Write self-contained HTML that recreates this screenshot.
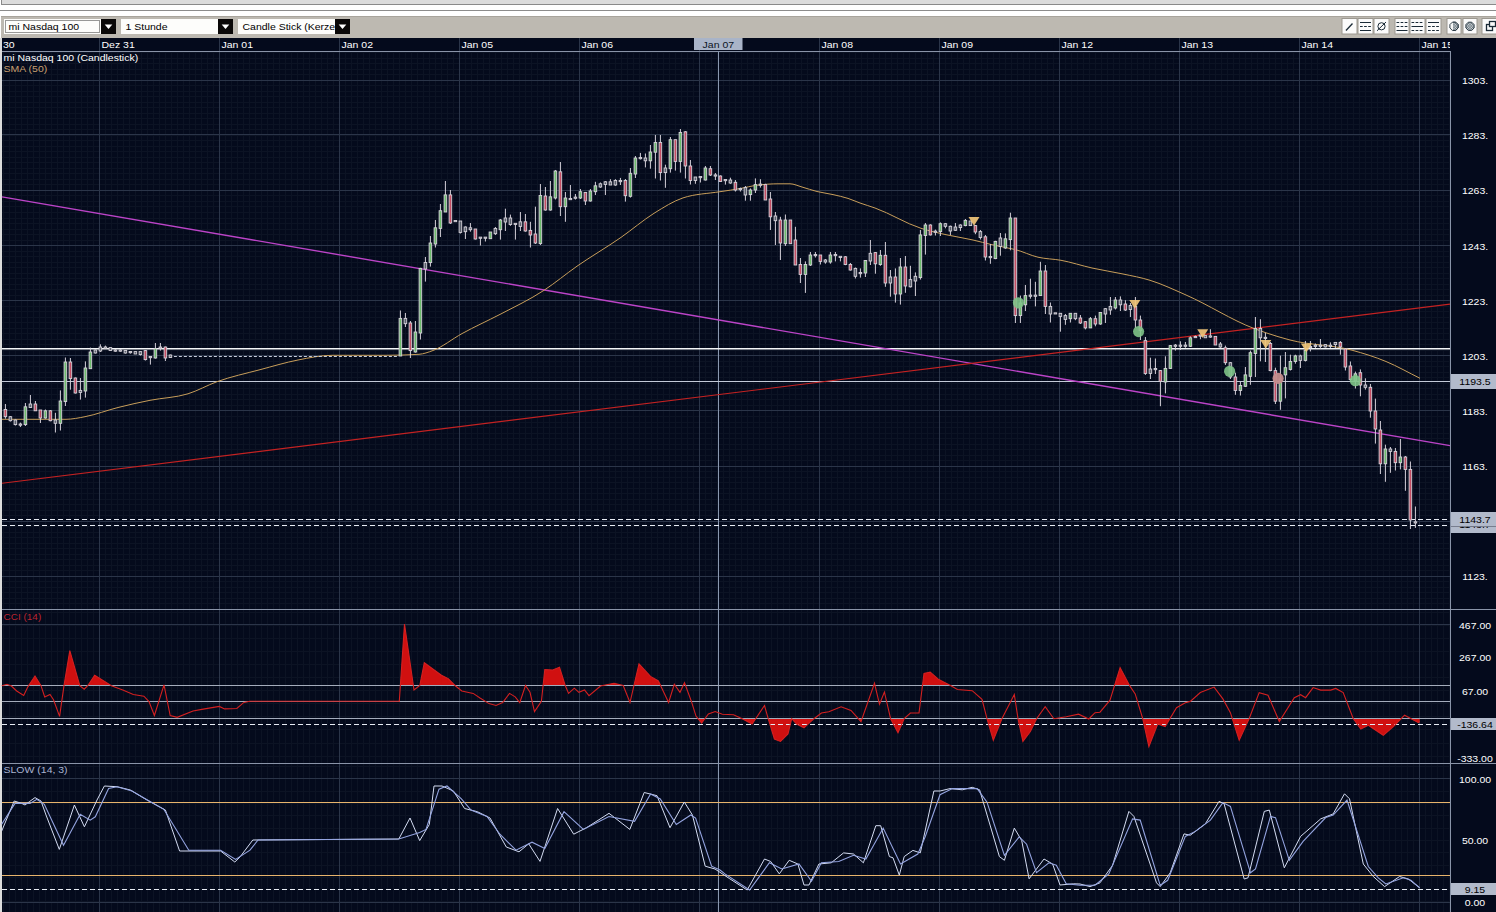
<!DOCTYPE html>
<html><head><meta charset="utf-8"><title>chart</title>
<style>html,body{margin:0;padding:0;background:#fff;width:1496px;height:912px;overflow:hidden;position:relative}</style>
</head><body>
<svg width="1496" height="912" viewBox="0 0 1496 912" style="position:absolute;left:0;top:0"><rect x="0" y="0" width="1496" height="37" fill="#ffffff"/><rect x="1" y="0" width="1496" height="4" fill="#dcdcdc"/><rect x="1" y="4" width="1496" height="1" fill="#8a8a8a"/><rect x="1" y="0" width="1" height="5" fill="#8a8a8a"/><rect x="0" y="10" width="1496" height="1" fill="#8c8c8c"/><rect x="1" y="16" width="1496" height="22" fill="#bdb9b1"/><rect x="1" y="16" width="1496" height="1" fill="#a8a49c"/><rect x="4" y="19" width="97" height="15" fill="#fdfdfb"/><svg x="4" y="19" width="97" height="15"><text transform="translate(4.50 11.20) scale(1 0.92)" x="0" y="0" font-family="Liberation Sans, sans-serif" font-size="10.5" fill="#000">mi Nasdaq 100</text></svg><rect x="5.5" y="20.5" width="94" height="12" fill="none" stroke="#333" stroke-width="1" stroke-dasharray="1,1"/><rect x="101" y="19" width="15" height="15" fill="#0a0808"/><polygon points="104.7,24.5 112.3,24.5 108.5,29" fill="#ffffff"/><rect x="121" y="19" width="97" height="15" fill="#fdfdfb"/><svg x="121" y="19" width="97" height="15"><text transform="translate(4.50 11.20) scale(1 0.92)" x="0" y="0" font-family="Liberation Sans, sans-serif" font-size="10.5" fill="#000">1 Stunde</text></svg><rect x="218" y="19" width="15" height="15" fill="#0a0808"/><polygon points="221.7,24.5 229.3,24.5 225.5,29" fill="#ffffff"/><rect x="238" y="19" width="97" height="15" fill="#fdfdfb"/><svg x="238" y="19" width="97" height="15"><text transform="translate(4.50 11.20) scale(1 0.92)" x="0" y="0" font-family="Liberation Sans, sans-serif" font-size="10.5" fill="#000">Candle Stick (Kerze</text></svg><rect x="335" y="19" width="15" height="15" fill="#0a0808"/><polygon points="338.7,24.5 346.3,24.5 342.5,29" fill="#ffffff"/><rect x="1342" y="18.5" width="15" height="15.5" fill="#fbfbfb" stroke="#9c9890" stroke-width="1"/><rect x="1358" y="18.5" width="15" height="15.5" fill="#fbfbfb" stroke="#9c9890" stroke-width="1"/><rect x="1374" y="18.5" width="15" height="15.5" fill="#fbfbfb" stroke="#9c9890" stroke-width="1"/><rect x="1395" y="18.5" width="14" height="15.5" fill="#fbfbfb" stroke="#9c9890" stroke-width="1"/><rect x="1410" y="18.5" width="15" height="15.5" fill="#fbfbfb" stroke="#9c9890" stroke-width="1"/><rect x="1426" y="18.5" width="15" height="15.5" fill="#fbfbfb" stroke="#9c9890" stroke-width="1"/><rect x="1447" y="18.5" width="14" height="15.5" fill="#fbfbfb" stroke="#9c9890" stroke-width="1"/><rect x="1463" y="18.5" width="14" height="15.5" fill="#fbfbfb" stroke="#9c9890" stroke-width="1"/><rect x="1482" y="18.5" width="15" height="15.5" fill="#fbfbfb" stroke="#9c9890" stroke-width="1"/><line x1="1346" y1="30.5" x2="1352.5" y2="23.5" stroke="#1a2a36" stroke-width="1.3"/><line x1="1360" y1="22.5" x2="1371" y2="22.5" stroke="#1a2a36" stroke-width="1"/><line x1="1360" y1="26.5" x2="1371" y2="26.5" stroke="#1a2a36" stroke-width="1" stroke-dasharray="2.7,1.4"/><line x1="1360" y1="30.5" x2="1371" y2="30.5" stroke="#1a2a36" stroke-width="1"/><circle cx="1381.5" cy="26.3" r="3.6" fill="none" stroke="#1a2a36" stroke-width="1"/><line x1="1377" y1="30.8" x2="1386" y2="22" stroke="#1a2a36" stroke-width="1"/><line x1="1396.5" y1="22.5" x2="1407.5" y2="22.5" stroke="#1a2a36" stroke-width="1" stroke-dasharray="2.7,1.4"/><line x1="1396.5" y1="26.5" x2="1407.5" y2="26.5" stroke="#1a2a36" stroke-width="1" stroke-dasharray="2.7,1.4"/><line x1="1396.5" y1="30.5" x2="1407.5" y2="30.5" stroke="#1a2a36" stroke-width="1"/><line x1="1411.5" y1="22.5" x2="1423" y2="22.5" stroke="#1a2a36" stroke-width="1" stroke-dasharray="2.7,1.4"/><line x1="1411.5" y1="26.5" x2="1423" y2="26.5" stroke="#1a2a36" stroke-width="1"/><line x1="1411.5" y1="30.5" x2="1423" y2="30.5" stroke="#1a2a36" stroke-width="1" stroke-dasharray="2.7,1.4"/><line x1="1428" y1="22.5" x2="1439" y2="22.5" stroke="#1a2a36" stroke-width="1"/><line x1="1428" y1="26.5" x2="1439" y2="26.5" stroke="#1a2a36" stroke-width="1" stroke-dasharray="2.7,1.4"/><line x1="1428" y1="30.5" x2="1439" y2="30.5" stroke="#1a2a36" stroke-width="1" stroke-dasharray="2.7,1.4"/><defs><pattern id="dots" width="1.6" height="1.6" patternUnits="userSpaceOnUse"><rect width="1.6" height="1.6" fill="#e8ecee"/><rect width="0.8" height="0.8" fill="#4a5a64"/><rect x="0.8" y="0.8" width="0.8" height="0.8" fill="#4a5a64"/></pattern><clipPath id="halfr"><rect x="1453" y="20" width="8" height="14"/></clipPath></defs><polygon points="1458.1,28.0 1455.7,30.4 1452.3,30.4 1449.9,28.0 1449.9,24.6 1452.3,22.2 1455.7,22.2 1458.1,24.6" fill="#f4f6f6" stroke="#1a2a36" stroke-width="0.9"/><g clip-path="url(#halfr)"><polygon points="1458.1,28.0 1455.7,30.4 1452.3,30.4 1449.9,28.0 1449.9,24.6 1452.3,22.2 1455.7,22.2 1458.1,24.6" fill="url(#dots)" stroke="#1a2a36" stroke-width="0.9"/></g><polygon points="1474.1,28.0 1471.7,30.4 1468.3,30.4 1465.9,28.0 1465.9,24.6 1468.3,22.2 1471.7,22.2 1474.1,24.6" fill="url(#dots)" stroke="#1a2a36" stroke-width="0.9"/><rect x="1486.5" y="24.5" width="6" height="6" fill="none" stroke="#1a2a36" stroke-width="1.3"/><rect x="1489.5" y="21.5" width="6" height="5" fill="#fbfbfb" stroke="#1a2a36" stroke-width="1.3"/><rect x="0" y="38" width="2" height="874" fill="#dcdcdc"/><rect x="2" y="38" width="1494" height="874" fill="#040a1c"/><path d="M3.5 51V912M9.5 51V912M15.5 51V912M21.5 51V912M27.5 51V912M33.5 51V912M39.5 51V912M45.5 51V912M51.5 51V912M57.5 51V912M63.5 51V912M69.5 51V912M75.5 51V912M81.5 51V912M87.5 51V912M93.5 51V912M99.5 51V912M105.5 51V912M111.5 51V912M117.5 51V912M123.5 51V912M129.5 51V912M135.5 51V912M141.5 51V912M147.5 51V912M153.5 51V912M159.5 51V912M165.5 51V912M171.5 51V912M177.5 51V912M183.5 51V912M189.5 51V912M195.5 51V912M201.5 51V912M207.5 51V912M213.5 51V912M219.5 51V912M225.5 51V912M231.5 51V912M237.5 51V912M243.5 51V912M249.5 51V912M255.5 51V912M261.5 51V912M267.5 51V912M273.5 51V912M279.5 51V912M285.5 51V912M291.5 51V912M297.5 51V912M303.5 51V912M309.5 51V912M315.5 51V912M321.5 51V912M327.5 51V912M333.5 51V912M339.5 51V912M345.5 51V912M351.5 51V912M357.5 51V912M363.5 51V912M369.5 51V912M375.5 51V912M381.5 51V912M387.5 51V912M393.5 51V912M399.5 51V912M405.5 51V912M411.5 51V912M417.5 51V912M423.5 51V912M429.5 51V912M435.5 51V912M441.5 51V912M447.5 51V912M453.5 51V912M459.5 51V912M465.5 51V912M471.5 51V912M477.5 51V912M483.5 51V912M489.5 51V912M495.5 51V912M501.5 51V912M507.5 51V912M513.5 51V912M519.5 51V912M525.5 51V912M531.5 51V912M537.5 51V912M543.5 51V912M549.5 51V912M555.5 51V912M561.5 51V912M567.5 51V912M573.5 51V912M579.5 51V912M585.5 51V912M591.5 51V912M597.5 51V912M603.5 51V912M609.5 51V912M615.5 51V912M621.5 51V912M627.5 51V912M633.5 51V912M639.5 51V912M645.5 51V912M651.5 51V912M657.5 51V912M663.5 51V912M669.5 51V912M675.5 51V912M681.5 51V912M687.5 51V912M693.5 51V912M699.5 51V912M705.5 51V912M711.5 51V912M717.5 51V912M723.5 51V912M729.5 51V912M735.5 51V912M741.5 51V912M747.5 51V912M753.5 51V912M759.5 51V912M765.5 51V912M771.5 51V912M777.5 51V912M783.5 51V912M789.5 51V912M795.5 51V912M801.5 51V912M807.5 51V912M813.5 51V912M819.5 51V912M825.5 51V912M831.5 51V912M837.5 51V912M843.5 51V912M849.5 51V912M855.5 51V912M861.5 51V912M867.5 51V912M873.5 51V912M879.5 51V912M885.5 51V912M891.5 51V912M897.5 51V912M903.5 51V912M909.5 51V912M915.5 51V912M921.5 51V912M927.5 51V912M933.5 51V912M939.5 51V912M945.5 51V912M951.5 51V912M957.5 51V912M963.5 51V912M969.5 51V912M975.5 51V912M981.5 51V912M987.5 51V912M993.5 51V912M999.5 51V912M1005.5 51V912M1011.5 51V912M1017.5 51V912M1023.5 51V912M1029.5 51V912M1035.5 51V912M1041.5 51V912M1047.5 51V912M1053.5 51V912M1059.5 51V912M1065.5 51V912M1071.5 51V912M1077.5 51V912M1083.5 51V912M1089.5 51V912M1095.5 51V912M1101.5 51V912M1107.5 51V912M1113.5 51V912M1119.5 51V912M1125.5 51V912M1131.5 51V912M1137.5 51V912M1143.5 51V912M1149.5 51V912M1155.5 51V912M1161.5 51V912M1167.5 51V912M1173.5 51V912M1179.5 51V912M1185.5 51V912M1191.5 51V912M1197.5 51V912M1203.5 51V912M1209.5 51V912M1215.5 51V912M1221.5 51V912M1227.5 51V912M1233.5 51V912M1239.5 51V912M1245.5 51V912M1251.5 51V912M1257.5 51V912M1263.5 51V912M1269.5 51V912M1275.5 51V912M1281.5 51V912M1287.5 51V912M1293.5 51V912M1299.5 51V912M1305.5 51V912M1311.5 51V912M1317.5 51V912M1323.5 51V912M1329.5 51V912M1335.5 51V912M1341.5 51V912M1347.5 51V912M1353.5 51V912M1359.5 51V912M1365.5 51V912M1371.5 51V912M1377.5 51V912M1383.5 51V912M1389.5 51V912M1395.5 51V912M1401.5 51V912M1407.5 51V912M1413.5 51V912M1419.5 51V912M1425.5 51V912M1431.5 51V912M1437.5 51V912M1443.5 51V912M1449.5 51V912" stroke="#0c1324" stroke-width="1"/><path d="M2 52.5H1450M2 58.5H1450M2 63.5H1450M2 69.5H1450M2 74.5H1450M2 80.5H1450M2 85.5H1450M2 91.5H1450M2 96.5H1450M2 102.5H1450M2 107.5H1450M2 113.5H1450M2 118.5H1450M2 124.5H1450M2 129.5H1450M2 135.5H1450M2 140.5H1450M2 146.5H1450M2 151.5H1450M2 157.5H1450M2 162.5H1450M2 168.5H1450M2 173.5H1450M2 179.5H1450M2 184.5H1450M2 190.5H1450M2 195.5H1450M2 201.5H1450M2 206.5H1450M2 212.5H1450M2 218.5H1450M2 223.5H1450M2 229.5H1450M2 234.5H1450M2 240.5H1450M2 245.5H1450M2 251.5H1450M2 256.5H1450M2 262.5H1450M2 267.5H1450M2 273.5H1450M2 278.5H1450M2 284.5H1450M2 289.5H1450M2 295.5H1450M2 300.5H1450M2 306.5H1450M2 311.5H1450M2 317.5H1450M2 322.5H1450M2 328.5H1450M2 333.5H1450M2 339.5H1450M2 344.5H1450M2 350.5H1450M2 355.5H1450M2 361.5H1450M2 366.5H1450M2 372.5H1450M2 377.5H1450M2 383.5H1450M2 388.5H1450M2 394.5H1450M2 399.5H1450M2 405.5H1450M2 410.5H1450M2 416.5H1450M2 422.5H1450M2 427.5H1450M2 433.5H1450M2 438.5H1450M2 444.5H1450M2 449.5H1450M2 455.5H1450M2 460.5H1450M2 466.5H1450M2 471.5H1450M2 477.5H1450M2 482.5H1450M2 488.5H1450M2 493.5H1450M2 499.5H1450M2 504.5H1450M2 510.5H1450M2 515.5H1450M2 521.5H1450M2 526.5H1450M2 532.5H1450M2 537.5H1450M2 543.5H1450M2 548.5H1450M2 554.5H1450M2 559.5H1450M2 565.5H1450M2 570.5H1450M2 576.5H1450M2 581.5H1450M2 587.5H1450M2 592.5H1450M2 598.5H1450M2 603.5H1450" stroke="#0c1324" stroke-width="1"/><path d="M2 612.5H1450M2 625.5H1450M2 638.5H1450M2 651.5H1450M2 664.5H1450M2 677.5H1450M2 690.5H1450M2 703.5H1450M2 716.5H1450M2 729.5H1450M2 743.5H1450M2 756.5H1450M2 766.5H1450M2 778.5H1450M2 791.5H1450M2 803.5H1450M2 815.5H1450M2 828.5H1450M2 840.5H1450M2 852.5H1450M2 865.5H1450M2 877.5H1450M2 889.5H1450M2 901.5H1450" stroke="#0c1324" stroke-width="1"/><path d="M2 80.5H1450M2 134.5H1450M2 190.5H1450M2 245.5H1450M2 300.5H1450M2 355.5H1450M2 410.5H1450M2 466.5H1450M2 521.5H1450M2 576.5H1450M2 624.5H1450M2 778.5H1450M2 902.5H1450" stroke="#2b3549" stroke-width="1"/><path d="M99.5 38V912M219.5 38V912M339.5 38V912M459.5 38V912M579.5 38V912M699.5 38V912M819.5 38V912M939.5 38V912M1059.5 38V912M1179.5 38V912M1299.5 38V912M1419.5 38V912" stroke="#2b3549" stroke-width="1"/><rect x="2" y="51" width="1448" height="1" fill="#8a94a8"/><rect x="2" y="609" width="1494" height="1" fill="#8a94a8"/><rect x="2" y="763" width="1494" height="1" fill="#8a94a8"/><rect x="1450" y="51" width="1" height="861" fill="#8a94a8"/><rect x="1451" y="38" width="45" height="13" fill="#040a1c"/><svg x="2" y="38" width="1448" height="13"><text transform="translate(1.00 10.20) scale(1 0.92)" x="0" y="0" font-family="Liberation Sans, sans-serif" font-size="10.5" fill="#ffffff">30</text><text transform="translate(99.50 10.20) scale(1 0.92)" x="0" y="0" font-family="Liberation Sans, sans-serif" font-size="10.5" fill="#ffffff">Dez 31</text><text transform="translate(219.50 10.20) scale(1 0.92)" x="0" y="0" font-family="Liberation Sans, sans-serif" font-size="10.5" fill="#ffffff">Jan 01</text><text transform="translate(339.50 10.20) scale(1 0.92)" x="0" y="0" font-family="Liberation Sans, sans-serif" font-size="10.5" fill="#ffffff">Jan 02</text><text transform="translate(459.50 10.20) scale(1 0.92)" x="0" y="0" font-family="Liberation Sans, sans-serif" font-size="10.5" fill="#ffffff">Jan 05</text><text transform="translate(579.50 10.20) scale(1 0.92)" x="0" y="0" font-family="Liberation Sans, sans-serif" font-size="10.5" fill="#ffffff">Jan 06</text><text transform="translate(819.50 10.20) scale(1 0.92)" x="0" y="0" font-family="Liberation Sans, sans-serif" font-size="10.5" fill="#ffffff">Jan 08</text><text transform="translate(939.50 10.20) scale(1 0.92)" x="0" y="0" font-family="Liberation Sans, sans-serif" font-size="10.5" fill="#ffffff">Jan 09</text><text transform="translate(1059.50 10.20) scale(1 0.92)" x="0" y="0" font-family="Liberation Sans, sans-serif" font-size="10.5" fill="#ffffff">Jan 12</text><text transform="translate(1179.50 10.20) scale(1 0.92)" x="0" y="0" font-family="Liberation Sans, sans-serif" font-size="10.5" fill="#ffffff">Jan 13</text><text transform="translate(1299.50 10.20) scale(1 0.92)" x="0" y="0" font-family="Liberation Sans, sans-serif" font-size="10.5" fill="#ffffff">Jan 14</text><text transform="translate(1419.50 10.20) scale(1 0.92)" x="0" y="0" font-family="Liberation Sans, sans-serif" font-size="10.5" fill="#ffffff">Jan 15</text></svg><rect x="694" y="38" width="48.5" height="12" fill="#a9b4c8"/><text transform="translate(718.30 48.00) scale(1 0.92)" x="0" y="0" text-anchor="middle" font-family="Liberation Sans, sans-serif" font-size="10.5" fill="#0c1424">Jan 07</text><rect x="718" y="51" width="1" height="861" fill="#8a98b0"/><text transform="translate(3.50 60.80) scale(1 0.92)" x="0" y="0" font-family="Liberation Sans, sans-serif" font-size="10.5" fill="#ffffff">mi Nasdaq 100 (Candlestick)</text><text transform="translate(3.50 71.60) scale(1 0.92)" x="0" y="0" font-family="Liberation Sans, sans-serif" font-size="10.5" fill="#c8a070">SMA (50)</text><rect x="2" y="348" width="1448" height="1.5" fill="#f4f6f8"/><rect x="2" y="381" width="1448" height="1" fill="#c4cad8"/><path d="M2 519.5H1450M2 525.5H1450" stroke="#e8ecf4" stroke-width="1.2" stroke-dasharray="5,3"/><line x1="2" y1="196.8436" x2="1450" y2="445.61" stroke="#bc44c8" stroke-width="1.4"/><line x1="2" y1="483.2526" x2="1450" y2="304.135" stroke="#c42222" stroke-width="1.2"/><path d="M2.0 419.3C23.3 419.3 44.7 419.3 66.0 419.3C72.3 419.3 78.7 417.9 85.0 416.7C96.0 414.6 107.0 410.3 118.0 407.5C128.7 404.8 139.3 402.4 150.0 400.3C162.7 397.8 175.3 397.7 188.0 393.8C197.7 390.8 207.3 385.2 217.0 381.7C231.3 376.5 245.7 373.5 260.0 369.7C272.7 366.3 285.3 362.5 298.0 360.0C309.3 357.8 320.7 355.3 332.0 355.3C349.7 355.3 367.3 355.3 385.0 355.3C396.3 355.3 407.7 355.0 419.0 354.3C423.7 354.0 428.3 352.2 433.0 350.5C442.7 346.9 452.3 338.9 462.0 333.6C474.7 326.6 487.3 321.0 500.0 314.4C514.7 306.7 529.3 299.9 544.0 290.3C555.0 283.1 566.0 273.9 577.0 266.2C591.7 256.0 606.3 247.6 621.0 237.4C632.0 229.7 643.0 220.2 654.0 213.3C663.7 207.3 673.3 201.1 683.0 197.9C695.3 193.8 707.7 193.7 720.0 191.7C727.0 190.6 734.0 189.7 741.0 188.4C746.0 187.5 751.0 186.0 756.0 185.3C763.7 184.3 771.3 183.8 779.0 183.8C782.7 183.8 786.3 183.8 790.0 183.8C794.0 183.8 798.0 185.9 802.0 187.0C807.0 188.4 812.0 190.3 817.0 191.5C822.3 192.8 827.7 193.4 833.0 194.6C838.0 195.7 843.0 196.8 848.0 198.4C852.0 199.7 856.0 201.6 860.0 203.0C865.0 204.8 870.0 206.2 875.0 208.0C890.3 213.5 905.7 223.4 921.0 228.3C929.7 231.1 938.3 233.0 947.0 234.9C955.7 236.8 964.3 238.0 973.0 240.0C979.3 241.4 985.7 243.3 992.0 244.7C996.3 245.7 1000.7 246.5 1005.0 247.4C1008.3 248.1 1011.7 248.7 1015.0 249.5C1022.7 251.4 1030.3 255.4 1038.0 257.2C1045.7 259.0 1053.3 258.9 1061.0 260.3C1071.3 262.2 1081.7 265.7 1092.0 268.0C1102.3 270.3 1112.7 271.8 1123.0 274.0C1132.0 275.9 1141.0 277.5 1150.0 280.3C1162.0 284.0 1174.0 289.7 1186.0 295.0C1208.7 304.9 1231.3 319.9 1254.0 328.5C1258.0 330.0 1262.0 331.4 1266.0 332.8C1274.0 335.5 1282.0 337.9 1290.0 340.0C1310.7 345.4 1331.3 344.6 1352.0 350.2C1363.3 353.3 1374.7 356.8 1386.0 361.5C1397.3 366.2 1408.7 372.7 1420.0 378.3" fill="none" stroke="#c89e5a" stroke-width="1"/><path d="M173.9 356.5h3M178.9 356.5h3M183.9 356.5h3M188.9 356.5h3M193.9 356.5h3M198.9 356.5h3M203.9 356.5h3M208.9 356.5h3M213.9 356.5h3M218.9 356.5h3M223.9 356.5h3M228.9 356.5h3M233.9 356.5h3M238.9 356.5h3M243.9 356.5h3M248.9 356.5h3M253.9 356.5h3M258.9 356.5h3M263.9 356.5h3M268.9 356.5h3M273.9 356.5h3M278.9 356.5h3M283.9 356.5h3M288.9 356.5h3M293.9 356.5h3M298.9 356.5h3M303.9 356.5h3M308.9 356.5h3M313.9 356.5h3M318.9 356.5h3M323.9 356.5h3M328.9 356.5h3M333.9 356.5h3M338.9 356.5h3M343.9 356.5h3M348.9 356.5h3M353.9 356.5h3M358.9 356.5h3M363.9 356.5h3M368.9 356.5h3M373.9 356.5h3M378.9 356.5h3M383.9 356.5h3M388.9 356.5h3M393.9 356.5h3" stroke="#c4cad8" stroke-width="1"/><path d="M5.4 404.0V418.7M10.4 416.0V421.5M15.4 419.5V425.5M20.4 422.6V427.0M25.4 403.0V426.0M30.4 395.0V407.5M35.4 401.0V410.8M40.4 410.0V423.0M45.4 409.5V418.7M50.4 410.0V421.3M55.4 412.8V432.5M60.4 390.4V430.5M65.4 357.5V406.0M70.4 358.0V389.7M75.4 377.5V393.5M80.4 378.0V399.6M85.4 361.4V397.6M90.4 347.6V368.7M95.4 349.5V353.5M100.4 344.3V352.0M105.4 345.6V348.3M110.4 347.6V350.5M115.4 349.2V351.8M120.4 349.2V351.8M125.4 350.5V353.6M130.4 351.6V353.6M135.4 351.6V354.0M140.4 351.6V355.5M145.4 350.0V360.5M150.4 356.6V364.6M155.4 343.0V358.6M160.4 343.0V350.6M165.4 346.6V361.0M170.4 354.6V357.6M400.4 310.5V356.0M405.4 313.0V327.0M410.4 321.0V358.0M415.4 321.0V352.6M420.4 267.8V339.5M425.4 257.0V281.6M430.4 236.0V266.6M435.4 220.0V247.5M440.4 204.0V237.0M445.4 181.0V212.0M450.4 190.0V224.0M455.4 220.5V221.5M460.4 221.0V233.5M465.4 226.4V239.0M470.4 223.0V231.7M475.4 229.0V239.5M480.4 237.6V245.5M485.4 237.6V241.5M490.4 232.0V238.7M495.4 227.0V235.0M500.4 219.0V239.6M505.4 208.7V231.0M510.4 214.6V225.8M515.4 223.0V239.6M520.4 212.0V231.0M525.4 214.0V231.7M530.4 221.8V247.5M535.4 206.7V244.0M540.4 184.0V245.0M545.4 187.0V210.7M550.4 181.0V210.7M555.4 170.0V199.5M560.4 162.0V216.0M565.4 192.0V221.8M570.4 185.0V199.6M575.4 194.0V199.6M580.4 189.0V199.0M585.4 192.0V205.0M590.4 189.0V201.6M595.4 181.8V195.0M600.4 182.5V187.8M605.4 181.0V195.0M610.4 179.2V185.0M615.4 179.2V185.8M620.4 177.9V185.0M625.4 179.0V201.6M630.4 168.0V197.6M635.4 156.0V178.0M640.4 152.9V159.5M645.4 153.5V167.4M650.4 145.0V168.7M655.4 135.0V178.5M660.4 135.0V180.5M665.4 164.7V187.8M670.4 137.0V172.6M675.4 139.7V170.6M680.4 129.0V172.6M685.4 131.0V178.5M690.4 160.0V184.5M695.4 177.0V183.8M700.4 177.0V182.5M705.4 166.0V180.5M710.4 166.0V176.0M715.4 173.0V180.0M720.4 175.4V181.5M725.4 179.2V184.6M730.4 177.7V183.8M735.4 180.0V191.5M740.4 187.6V191.5M745.4 186.0V200.7M750.4 188.4V200.7M755.4 178.4V193.0M760.4 179.2V187.6M765.4 183.8V200.0M770.4 192.0V230.0M775.4 212.0V245.0M780.4 216.8V260.0M785.4 214.5V246.0M790.4 220.0V243.7M795.4 226.8V265.0M800.4 258.0V283.0M805.4 261.4V292.9M810.4 252.0V266.0M815.4 252.0V257.5M820.4 255.0V264.5M825.4 259.0V263.7M830.4 252.0V263.7M835.4 252.0V261.4M840.4 256.8V261.4M845.4 256.0V265.2M850.4 263.0V270.6M855.4 267.5V278.5M860.4 268.4V277.6M865.4 260.0V277.0M870.4 240.0V265.0M875.4 252.0V273.7M880.4 250.0V265.8M885.4 242.0V286.8M890.4 270.0V296.7M895.4 268.4V302.6M900.4 258.0V304.6M905.4 256.0V292.8M910.4 265.8V287.5M915.4 272.4V296.0M920.4 230.0V279.6M925.4 223.0V254.6M930.4 224.3V235.5M935.4 229.6V235.5M940.4 222.4V236.0M945.4 223.0V228.3M950.4 225.6V235.0M955.4 223.0V231.0M960.4 224.3V231.0M965.4 219.0V226.3M970.4 221.0V225.6M975.4 225.0V234.2M980.4 230.0V239.5M985.4 235.0V260.5M990.4 244.0V263.8M995.4 240.8V259.2M1000.4 233.0V255.7M1005.4 233.4V248.8M1010.4 212.7V250.3M1015.4 218.0V323.0M1020.4 295.6V323.0M1025.4 285.0V311.0M1030.4 278.7V298.7M1035.4 281.8V306.4M1040.4 261.8V295.6M1045.4 265.0V314.0M1050.4 302.5V322.5M1055.4 313.0V314.0M1060.4 313.3V331.7M1065.4 314.0V324.8M1070.4 313.3V322.5M1075.4 313.3V320.2M1080.4 315.0V324.0M1085.4 321.0V329.4M1090.4 317.0V327.9M1095.4 315.6V326.3M1100.4 312.5V324.8M1105.4 308.0V323.0M1110.4 297.0V314.8M1115.4 297.0V309.5M1120.4 296.4V311.0M1125.4 300.2V311.0M1130.4 303.0V317.0M1135.4 297.0V328.0M1140.4 315.6V340.0M1145.4 337.0V374.9M1150.4 357.7V379.0M1155.4 358.5V374.0M1160.4 370.0V406.2M1165.4 356.3V393.4M1170.4 345.0V369.0M1175.4 344.0V350.6M1180.4 341.3V350.0M1185.4 342.0V347.8M1190.4 336.4V347.0M1195.4 335.6V337.8M1200.4 335.0V339.2M1205.4 335.6V337.8M1210.4 329.2V337.8M1215.4 336.4V345.0M1220.4 342.0V347.8M1225.4 345.6V364.9M1230.4 362.0V379.0M1235.4 372.7V394.8M1240.4 382.0V395.5M1245.4 367.0V387.0M1250.4 350.6V384.8M1255.4 317.0V377.0M1260.4 319.2V361.3M1265.4 332.8V362.0M1270.4 342.0V371.3M1275.4 367.7V404.0M1280.4 355.6V409.8M1285.4 352.0V398.4M1290.4 354.7V370.5M1295.4 354.7V363.7M1300.4 354.7V368.0M1305.4 341.0V361.5M1310.4 341.0V351.4M1315.4 343.5V348.0M1320.4 339.0V349.0M1325.4 344.0V347.5M1330.4 342.4V348.0M1335.4 342.4V348.0M1340.4 341.0V354.7M1345.4 348.0V370.5M1350.4 361.5V381.7M1355.4 371.6V388.5M1360.4 369.4V396.3M1365.4 378.3V389.6M1370.4 384.0V417.7M1375.4 398.6V443.6M1380.4 421.0V474.0M1385.4 444.7V481.8M1390.4 447.0V472.8M1395.4 448.0V470.5M1400.4 439.0V469.4M1405.4 456.0V490.8M1410.4 461.5V529.0M1415.4 506.5V527.9" stroke="#d6d2da" stroke-width="1"/><rect x="4.1" y="409.5" width="2.6" height="7.2" fill="#c44c62" stroke="#d6d2da" stroke-width="0.9"/><rect x="9.1" y="416.7" width="2.6" height="4.0" fill="#5a606c" stroke="#d6d2da" stroke-width="0.9"/><rect x="14.1" y="420.0" width="2.6" height="4.6" fill="#5a606c" stroke="#d6d2da" stroke-width="0.9"/><rect x="19.1" y="424.0" width="2.6" height="1.2" fill="#5a606c" stroke="#d6d2da" stroke-width="0.9"/><rect x="24.1" y="406.8" width="2.6" height="17.8" fill="#6cbc6c" stroke="#d6d2da" stroke-width="0.9"/><rect x="29.1" y="404.0" width="2.6" height="3.5" fill="#5a606c" stroke="#d6d2da" stroke-width="0.9"/><rect x="34.1" y="404.0" width="2.6" height="6.8" fill="#c44c62" stroke="#d6d2da" stroke-width="0.9"/><rect x="39.1" y="410.0" width="2.6" height="8.0" fill="#c44c62" stroke="#d6d2da" stroke-width="0.9"/><rect x="44.1" y="410.8" width="2.6" height="7.2" fill="#6cbc6c" stroke="#d6d2da" stroke-width="0.9"/><rect x="49.1" y="410.8" width="2.6" height="9.9" fill="#c44c62" stroke="#d6d2da" stroke-width="0.9"/><rect x="54.1" y="420.0" width="2.6" height="3.3" fill="#5a606c" stroke="#d6d2da" stroke-width="0.9"/><rect x="59.1" y="401.0" width="2.6" height="22.3" fill="#6cbc6c" stroke="#d6d2da" stroke-width="0.9"/><rect x="64.1" y="362.0" width="2.6" height="39.6" fill="#6cbc6c" stroke="#d6d2da" stroke-width="0.9"/><rect x="69.1" y="362.0" width="2.6" height="16.6" fill="#c44c62" stroke="#d6d2da" stroke-width="0.9"/><rect x="74.1" y="378.0" width="2.6" height="15.0" fill="#c44c62" stroke="#d6d2da" stroke-width="0.9"/><rect x="79.1" y="390.4" width="2.6" height="2.0" fill="#5a606c" stroke="#d6d2da" stroke-width="0.9"/><rect x="84.1" y="368.0" width="2.6" height="23.0" fill="#6cbc6c" stroke="#d6d2da" stroke-width="0.9"/><rect x="89.1" y="352.0" width="2.6" height="16.7" fill="#6cbc6c" stroke="#d6d2da" stroke-width="0.9"/><rect x="94.1" y="350.0" width="2.6" height="3.0" fill="#5a606c" stroke="#d6d2da" stroke-width="0.9"/><rect x="99.1" y="347.0" width="2.6" height="4.0" fill="#5a606c" stroke="#d6d2da" stroke-width="0.9"/><rect x="104.1" y="347.0" width="2.6" height="1.3" fill="#5a606c" stroke="#d6d2da" stroke-width="0.9"/><rect x="109.1" y="347.6" width="2.6" height="2.9" fill="#5a606c" stroke="#d6d2da" stroke-width="0.9"/><rect x="114.1" y="350.0" width="2.6" height="1.2" fill="#5a606c" stroke="#d6d2da" stroke-width="0.9"/><rect x="119.1" y="350.0" width="2.6" height="1.2" fill="#5a606c" stroke="#d6d2da" stroke-width="0.9"/><rect x="124.1" y="350.5" width="2.6" height="2.5" fill="#5a606c" stroke="#d6d2da" stroke-width="0.9"/><rect x="129.1" y="351.5" width="2.6" height="1.2" fill="#5a606c" stroke="#d6d2da" stroke-width="0.9"/><rect x="134.1" y="351.6" width="2.6" height="2.4" fill="#5a606c" stroke="#d6d2da" stroke-width="0.9"/><rect x="139.1" y="351.6" width="2.6" height="2.9" fill="#5a606c" stroke="#d6d2da" stroke-width="0.9"/><rect x="144.1" y="350.6" width="2.6" height="9.0" fill="#c44c62" stroke="#d6d2da" stroke-width="0.9"/><rect x="149.1" y="356.5" width="2.6" height="1.2" fill="#5a606c" stroke="#d6d2da" stroke-width="0.9"/><rect x="154.1" y="348.6" width="2.6" height="9.4" fill="#6cbc6c" stroke="#d6d2da" stroke-width="0.9"/><rect x="159.1" y="347.0" width="2.6" height="1.2" fill="#5a606c" stroke="#d6d2da" stroke-width="0.9"/><rect x="164.1" y="347.0" width="2.6" height="11.0" fill="#c44c62" stroke="#d6d2da" stroke-width="0.9"/><rect x="169.1" y="355.0" width="2.6" height="2.5" fill="#5a606c" stroke="#d6d2da" stroke-width="0.9"/><rect x="399.1" y="318.4" width="2.6" height="37.6" fill="#6cbc6c" stroke="#d6d2da" stroke-width="0.9"/><rect x="404.1" y="318.4" width="2.6" height="5.3" fill="#5a606c" stroke="#d6d2da" stroke-width="0.9"/><rect x="409.1" y="323.0" width="2.6" height="27.6" fill="#c44c62" stroke="#d6d2da" stroke-width="0.9"/><rect x="414.1" y="332.0" width="2.6" height="20.0" fill="#6cbc6c" stroke="#d6d2da" stroke-width="0.9"/><rect x="419.1" y="268.4" width="2.6" height="64.6" fill="#6cbc6c" stroke="#d6d2da" stroke-width="0.9"/><rect x="424.1" y="262.5" width="2.6" height="6.5" fill="#5a606c" stroke="#d6d2da" stroke-width="0.9"/><rect x="429.1" y="243.0" width="2.6" height="19.6" fill="#6cbc6c" stroke="#d6d2da" stroke-width="0.9"/><rect x="434.1" y="227.8" width="2.6" height="16.2" fill="#6cbc6c" stroke="#d6d2da" stroke-width="0.9"/><rect x="439.1" y="210.7" width="2.6" height="17.7" fill="#6cbc6c" stroke="#d6d2da" stroke-width="0.9"/><rect x="444.1" y="194.9" width="2.6" height="17.1" fill="#6cbc6c" stroke="#d6d2da" stroke-width="0.9"/><rect x="449.1" y="194.9" width="2.6" height="28.1" fill="#c44c62" stroke="#d6d2da" stroke-width="0.9"/><rect x="454.1" y="220.5" width="2.6" height="1.2" fill="#5a606c" stroke="#d6d2da" stroke-width="0.9"/><rect x="459.1" y="221.0" width="2.6" height="11.4" fill="#5a606c" stroke="#d6d2da" stroke-width="0.9"/><rect x="464.1" y="227.0" width="2.6" height="4.7" fill="#5a606c" stroke="#d6d2da" stroke-width="0.9"/><rect x="469.1" y="227.8" width="2.6" height="1.9" fill="#5a606c" stroke="#d6d2da" stroke-width="0.9"/><rect x="474.1" y="229.0" width="2.6" height="10.0" fill="#c44c62" stroke="#d6d2da" stroke-width="0.9"/><rect x="479.1" y="237.1" width="2.6" height="1.2" fill="#5a606c" stroke="#d6d2da" stroke-width="0.9"/><rect x="484.1" y="237.1" width="2.6" height="1.2" fill="#5a606c" stroke="#d6d2da" stroke-width="0.9"/><rect x="489.1" y="232.0" width="2.6" height="6.7" fill="#6cbc6c" stroke="#d6d2da" stroke-width="0.9"/><rect x="494.1" y="228.4" width="2.6" height="5.3" fill="#5a606c" stroke="#d6d2da" stroke-width="0.9"/><rect x="499.1" y="220.0" width="2.6" height="9.7" fill="#6cbc6c" stroke="#d6d2da" stroke-width="0.9"/><rect x="504.1" y="218.0" width="2.6" height="4.0" fill="#5a606c" stroke="#d6d2da" stroke-width="0.9"/><rect x="509.1" y="218.0" width="2.6" height="6.5" fill="#5a606c" stroke="#d6d2da" stroke-width="0.9"/><rect x="514.1" y="223.3" width="2.6" height="1.2" fill="#5a606c" stroke="#d6d2da" stroke-width="0.9"/><rect x="519.1" y="221.8" width="2.6" height="4.6" fill="#5a606c" stroke="#d6d2da" stroke-width="0.9"/><rect x="524.1" y="221.8" width="2.6" height="9.2" fill="#c44c62" stroke="#d6d2da" stroke-width="0.9"/><rect x="529.1" y="230.4" width="2.6" height="4.6" fill="#c44c62" stroke="#d6d2da" stroke-width="0.9"/><rect x="534.1" y="234.0" width="2.6" height="9.0" fill="#c44c62" stroke="#d6d2da" stroke-width="0.9"/><rect x="539.1" y="195.5" width="2.6" height="48.1" fill="#6cbc6c" stroke="#d6d2da" stroke-width="0.9"/><rect x="544.1" y="196.0" width="2.6" height="14.0" fill="#c44c62" stroke="#d6d2da" stroke-width="0.9"/><rect x="549.1" y="196.8" width="2.6" height="13.2" fill="#6cbc6c" stroke="#d6d2da" stroke-width="0.9"/><rect x="554.1" y="171.0" width="2.6" height="27.0" fill="#6cbc6c" stroke="#d6d2da" stroke-width="0.9"/><rect x="559.1" y="171.8" width="2.6" height="34.9" fill="#c44c62" stroke="#d6d2da" stroke-width="0.9"/><rect x="564.1" y="198.0" width="2.6" height="8.7" fill="#6cbc6c" stroke="#d6d2da" stroke-width="0.9"/><rect x="569.1" y="198.5" width="2.6" height="1.2" fill="#5a606c" stroke="#d6d2da" stroke-width="0.9"/><rect x="574.1" y="197.1" width="2.6" height="1.2" fill="#5a606c" stroke="#d6d2da" stroke-width="0.9"/><rect x="579.1" y="191.7" width="2.6" height="6.3" fill="#6cbc6c" stroke="#d6d2da" stroke-width="0.9"/><rect x="584.1" y="192.4" width="2.6" height="8.6" fill="#c44c62" stroke="#d6d2da" stroke-width="0.9"/><rect x="589.1" y="191.0" width="2.6" height="10.0" fill="#6cbc6c" stroke="#d6d2da" stroke-width="0.9"/><rect x="594.1" y="185.8" width="2.6" height="5.9" fill="#6cbc6c" stroke="#d6d2da" stroke-width="0.9"/><rect x="599.1" y="183.8" width="2.6" height="3.2" fill="#5a606c" stroke="#d6d2da" stroke-width="0.9"/><rect x="604.1" y="181.8" width="2.6" height="2.7" fill="#5a606c" stroke="#d6d2da" stroke-width="0.9"/><rect x="609.1" y="181.8" width="2.6" height="3.2" fill="#5a606c" stroke="#d6d2da" stroke-width="0.9"/><rect x="614.1" y="180.5" width="2.6" height="4.5" fill="#5a606c" stroke="#d6d2da" stroke-width="0.9"/><rect x="619.1" y="180.5" width="2.6" height="1.2" fill="#5a606c" stroke="#d6d2da" stroke-width="0.9"/><rect x="624.1" y="180.5" width="2.6" height="15.2" fill="#c44c62" stroke="#d6d2da" stroke-width="0.9"/><rect x="629.1" y="173.3" width="2.6" height="23.0" fill="#6cbc6c" stroke="#d6d2da" stroke-width="0.9"/><rect x="634.1" y="158.0" width="2.6" height="16.0" fill="#6cbc6c" stroke="#d6d2da" stroke-width="0.9"/><rect x="639.1" y="157.5" width="2.6" height="1.2" fill="#5a606c" stroke="#d6d2da" stroke-width="0.9"/><rect x="644.1" y="158.0" width="2.6" height="2.8" fill="#5a606c" stroke="#d6d2da" stroke-width="0.9"/><rect x="649.1" y="152.0" width="2.6" height="8.8" fill="#6cbc6c" stroke="#d6d2da" stroke-width="0.9"/><rect x="654.1" y="142.4" width="2.6" height="9.8" fill="#6cbc6c" stroke="#d6d2da" stroke-width="0.9"/><rect x="659.1" y="142.4" width="2.6" height="30.2" fill="#c44c62" stroke="#d6d2da" stroke-width="0.9"/><rect x="664.1" y="168.0" width="2.6" height="4.6" fill="#5a606c" stroke="#d6d2da" stroke-width="0.9"/><rect x="669.1" y="139.7" width="2.6" height="29.0" fill="#6cbc6c" stroke="#d6d2da" stroke-width="0.9"/><rect x="674.1" y="139.7" width="2.6" height="21.7" fill="#c44c62" stroke="#d6d2da" stroke-width="0.9"/><rect x="679.1" y="132.5" width="2.6" height="28.9" fill="#6cbc6c" stroke="#d6d2da" stroke-width="0.9"/><rect x="684.1" y="131.8" width="2.6" height="34.2" fill="#c44c62" stroke="#d6d2da" stroke-width="0.9"/><rect x="689.1" y="166.0" width="2.6" height="14.5" fill="#c44c62" stroke="#d6d2da" stroke-width="0.9"/><rect x="694.1" y="177.0" width="2.6" height="3.5" fill="#5a606c" stroke="#d6d2da" stroke-width="0.9"/><rect x="699.1" y="176.5" width="2.6" height="1.2" fill="#5a606c" stroke="#d6d2da" stroke-width="0.9"/><rect x="704.1" y="168.0" width="2.6" height="12.0" fill="#6cbc6c" stroke="#d6d2da" stroke-width="0.9"/><rect x="709.1" y="168.7" width="2.6" height="6.3" fill="#c44c62" stroke="#d6d2da" stroke-width="0.9"/><rect x="714.1" y="174.9" width="2.6" height="1.2" fill="#5a606c" stroke="#d6d2da" stroke-width="0.9"/><rect x="719.1" y="176.0" width="2.6" height="5.5" fill="#c44c62" stroke="#d6d2da" stroke-width="0.9"/><rect x="724.1" y="179.5" width="2.6" height="1.2" fill="#5a606c" stroke="#d6d2da" stroke-width="0.9"/><rect x="729.1" y="180.0" width="2.6" height="3.0" fill="#5a606c" stroke="#d6d2da" stroke-width="0.9"/><rect x="734.1" y="182.3" width="2.6" height="7.7" fill="#c44c62" stroke="#d6d2da" stroke-width="0.9"/><rect x="739.1" y="188.5" width="2.6" height="1.2" fill="#5a606c" stroke="#d6d2da" stroke-width="0.9"/><rect x="744.1" y="187.6" width="2.6" height="7.4" fill="#5a606c" stroke="#d6d2da" stroke-width="0.9"/><rect x="749.1" y="190.0" width="2.6" height="4.6" fill="#6cbc6c" stroke="#d6d2da" stroke-width="0.9"/><rect x="754.1" y="184.6" width="2.6" height="5.4" fill="#6cbc6c" stroke="#d6d2da" stroke-width="0.9"/><rect x="759.1" y="184.1" width="2.6" height="1.2" fill="#5a606c" stroke="#d6d2da" stroke-width="0.9"/><rect x="764.1" y="184.6" width="2.6" height="15.4" fill="#c44c62" stroke="#d6d2da" stroke-width="0.9"/><rect x="769.1" y="199.0" width="2.6" height="17.8" fill="#c44c62" stroke="#d6d2da" stroke-width="0.9"/><rect x="774.1" y="216.0" width="2.6" height="4.7" fill="#5a606c" stroke="#d6d2da" stroke-width="0.9"/><rect x="779.1" y="220.0" width="2.6" height="23.0" fill="#c44c62" stroke="#d6d2da" stroke-width="0.9"/><rect x="784.1" y="220.0" width="2.6" height="23.7" fill="#6cbc6c" stroke="#d6d2da" stroke-width="0.9"/><rect x="789.1" y="220.0" width="2.6" height="23.7" fill="#c44c62" stroke="#d6d2da" stroke-width="0.9"/><rect x="794.1" y="240.0" width="2.6" height="25.0" fill="#c44c62" stroke="#d6d2da" stroke-width="0.9"/><rect x="799.1" y="264.5" width="2.6" height="9.9" fill="#c44c62" stroke="#d6d2da" stroke-width="0.9"/><rect x="804.1" y="264.5" width="2.6" height="9.9" fill="#6cbc6c" stroke="#d6d2da" stroke-width="0.9"/><rect x="809.1" y="255.0" width="2.6" height="10.0" fill="#6cbc6c" stroke="#d6d2da" stroke-width="0.9"/><rect x="814.1" y="254.5" width="2.6" height="1.2" fill="#5a606c" stroke="#d6d2da" stroke-width="0.9"/><rect x="819.1" y="255.0" width="2.6" height="6.4" fill="#c44c62" stroke="#d6d2da" stroke-width="0.9"/><rect x="824.1" y="260.0" width="2.6" height="2.0" fill="#5a606c" stroke="#d6d2da" stroke-width="0.9"/><rect x="829.1" y="255.0" width="2.6" height="7.0" fill="#6cbc6c" stroke="#d6d2da" stroke-width="0.9"/><rect x="834.1" y="254.5" width="2.6" height="1.2" fill="#5a606c" stroke="#d6d2da" stroke-width="0.9"/><rect x="839.1" y="256.3" width="2.6" height="1.2" fill="#5a606c" stroke="#d6d2da" stroke-width="0.9"/><rect x="844.1" y="256.8" width="2.6" height="7.7" fill="#c44c62" stroke="#d6d2da" stroke-width="0.9"/><rect x="849.1" y="264.5" width="2.6" height="5.5" fill="#c44c62" stroke="#d6d2da" stroke-width="0.9"/><rect x="854.1" y="268.4" width="2.6" height="7.9" fill="#5a606c" stroke="#d6d2da" stroke-width="0.9"/><rect x="859.1" y="272.5" width="2.6" height="1.2" fill="#5a606c" stroke="#d6d2da" stroke-width="0.9"/><rect x="864.1" y="260.5" width="2.6" height="12.5" fill="#6cbc6c" stroke="#d6d2da" stroke-width="0.9"/><rect x="869.1" y="253.3" width="2.6" height="7.7" fill="#5a606c" stroke="#d6d2da" stroke-width="0.9"/><rect x="874.1" y="252.6" width="2.6" height="11.2" fill="#c44c62" stroke="#d6d2da" stroke-width="0.9"/><rect x="879.1" y="255.3" width="2.6" height="9.2" fill="#6cbc6c" stroke="#d6d2da" stroke-width="0.9"/><rect x="884.1" y="255.3" width="2.6" height="27.7" fill="#c44c62" stroke="#d6d2da" stroke-width="0.9"/><rect x="889.1" y="277.0" width="2.6" height="6.0" fill="#5a606c" stroke="#d6d2da" stroke-width="0.9"/><rect x="894.1" y="277.0" width="2.6" height="17.0" fill="#c44c62" stroke="#d6d2da" stroke-width="0.9"/><rect x="899.1" y="267.0" width="2.6" height="27.0" fill="#6cbc6c" stroke="#d6d2da" stroke-width="0.9"/><rect x="904.1" y="267.0" width="2.6" height="19.0" fill="#c44c62" stroke="#d6d2da" stroke-width="0.9"/><rect x="909.1" y="279.6" width="2.6" height="7.2" fill="#5a606c" stroke="#d6d2da" stroke-width="0.9"/><rect x="914.1" y="276.3" width="2.6" height="4.7" fill="#5a606c" stroke="#d6d2da" stroke-width="0.9"/><rect x="919.1" y="234.9" width="2.6" height="42.7" fill="#6cbc6c" stroke="#d6d2da" stroke-width="0.9"/><rect x="924.1" y="225.0" width="2.6" height="10.5" fill="#6cbc6c" stroke="#d6d2da" stroke-width="0.9"/><rect x="929.1" y="225.0" width="2.6" height="9.9" fill="#c44c62" stroke="#d6d2da" stroke-width="0.9"/><rect x="934.1" y="231.1" width="2.6" height="1.2" fill="#5a606c" stroke="#d6d2da" stroke-width="0.9"/><rect x="939.1" y="223.7" width="2.6" height="7.9" fill="#6cbc6c" stroke="#d6d2da" stroke-width="0.9"/><rect x="944.1" y="223.7" width="2.6" height="2.6" fill="#5a606c" stroke="#d6d2da" stroke-width="0.9"/><rect x="949.1" y="226.3" width="2.6" height="4.7" fill="#5a606c" stroke="#d6d2da" stroke-width="0.9"/><rect x="954.1" y="227.0" width="2.6" height="3.3" fill="#5a606c" stroke="#d6d2da" stroke-width="0.9"/><rect x="959.1" y="225.0" width="2.6" height="2.6" fill="#5a606c" stroke="#d6d2da" stroke-width="0.9"/><rect x="964.1" y="220.4" width="2.6" height="5.2" fill="#6cbc6c" stroke="#d6d2da" stroke-width="0.9"/><rect x="969.1" y="221.0" width="2.6" height="4.6" fill="#5a606c" stroke="#d6d2da" stroke-width="0.9"/><rect x="974.1" y="225.6" width="2.6" height="6.4" fill="#c44c62" stroke="#d6d2da" stroke-width="0.9"/><rect x="979.1" y="231.6" width="2.6" height="5.9" fill="#5a606c" stroke="#d6d2da" stroke-width="0.9"/><rect x="984.1" y="236.8" width="2.6" height="20.2" fill="#c44c62" stroke="#d6d2da" stroke-width="0.9"/><rect x="989.1" y="256.5" width="2.6" height="1.2" fill="#5a606c" stroke="#d6d2da" stroke-width="0.9"/><rect x="994.1" y="241.4" width="2.6" height="17.2" fill="#6cbc6c" stroke="#d6d2da" stroke-width="0.9"/><rect x="999.1" y="238.0" width="2.6" height="8.5" fill="#5a606c" stroke="#d6d2da" stroke-width="0.9"/><rect x="1004.1" y="238.8" width="2.6" height="9.2" fill="#6cbc6c" stroke="#d6d2da" stroke-width="0.9"/><rect x="1009.1" y="218.0" width="2.6" height="21.6" fill="#6cbc6c" stroke="#d6d2da" stroke-width="0.9"/><rect x="1014.1" y="218.0" width="2.6" height="97.6" fill="#c44c62" stroke="#d6d2da" stroke-width="0.9"/><rect x="1019.1" y="303.0" width="2.6" height="12.6" fill="#6cbc6c" stroke="#d6d2da" stroke-width="0.9"/><rect x="1024.1" y="295.6" width="2.6" height="9.2" fill="#6cbc6c" stroke="#d6d2da" stroke-width="0.9"/><rect x="1029.1" y="295.1" width="2.6" height="1.2" fill="#5a606c" stroke="#d6d2da" stroke-width="0.9"/><rect x="1034.1" y="295.1" width="2.6" height="1.2" fill="#5a606c" stroke="#d6d2da" stroke-width="0.9"/><rect x="1039.1" y="271.0" width="2.6" height="24.6" fill="#6cbc6c" stroke="#d6d2da" stroke-width="0.9"/><rect x="1044.1" y="271.0" width="2.6" height="35.4" fill="#c44c62" stroke="#d6d2da" stroke-width="0.9"/><rect x="1049.1" y="306.4" width="2.6" height="7.6" fill="#5a606c" stroke="#d6d2da" stroke-width="0.9"/><rect x="1054.1" y="312.8" width="2.6" height="1.2" fill="#5a606c" stroke="#d6d2da" stroke-width="0.9"/><rect x="1059.1" y="313.3" width="2.6" height="3.1" fill="#5a606c" stroke="#d6d2da" stroke-width="0.9"/><rect x="1064.1" y="315.6" width="2.6" height="3.8" fill="#5a606c" stroke="#d6d2da" stroke-width="0.9"/><rect x="1069.1" y="313.3" width="2.6" height="5.4" fill="#6cbc6c" stroke="#d6d2da" stroke-width="0.9"/><rect x="1074.1" y="313.3" width="2.6" height="5.4" fill="#5a606c" stroke="#d6d2da" stroke-width="0.9"/><rect x="1079.1" y="318.0" width="2.6" height="5.0" fill="#c44c62" stroke="#d6d2da" stroke-width="0.9"/><rect x="1084.1" y="321.7" width="2.6" height="6.2" fill="#c44c62" stroke="#d6d2da" stroke-width="0.9"/><rect x="1089.1" y="318.7" width="2.6" height="9.2" fill="#6cbc6c" stroke="#d6d2da" stroke-width="0.9"/><rect x="1094.1" y="318.7" width="2.6" height="5.3" fill="#c44c62" stroke="#d6d2da" stroke-width="0.9"/><rect x="1099.1" y="312.5" width="2.6" height="11.5" fill="#6cbc6c" stroke="#d6d2da" stroke-width="0.9"/><rect x="1104.1" y="308.7" width="2.6" height="5.3" fill="#5a606c" stroke="#d6d2da" stroke-width="0.9"/><rect x="1109.1" y="306.4" width="2.6" height="3.6" fill="#5a606c" stroke="#d6d2da" stroke-width="0.9"/><rect x="1114.1" y="300.0" width="2.6" height="8.0" fill="#6cbc6c" stroke="#d6d2da" stroke-width="0.9"/><rect x="1119.1" y="300.0" width="2.6" height="4.8" fill="#5a606c" stroke="#d6d2da" stroke-width="0.9"/><rect x="1124.1" y="304.0" width="2.6" height="6.0" fill="#c44c62" stroke="#d6d2da" stroke-width="0.9"/><rect x="1129.1" y="305.6" width="2.6" height="3.9" fill="#5a606c" stroke="#d6d2da" stroke-width="0.9"/><rect x="1134.1" y="306.4" width="2.6" height="13.6" fill="#c44c62" stroke="#d6d2da" stroke-width="0.9"/><rect x="1139.1" y="320.0" width="2.6" height="10.6" fill="#c44c62" stroke="#d6d2da" stroke-width="0.9"/><rect x="1144.1" y="340.6" width="2.6" height="32.8" fill="#c44c62" stroke="#d6d2da" stroke-width="0.9"/><rect x="1149.1" y="369.0" width="2.6" height="4.4" fill="#5a606c" stroke="#d6d2da" stroke-width="0.9"/><rect x="1154.1" y="368.5" width="2.6" height="1.2" fill="#5a606c" stroke="#d6d2da" stroke-width="0.9"/><rect x="1159.1" y="370.6" width="2.6" height="10.7" fill="#c44c62" stroke="#d6d2da" stroke-width="0.9"/><rect x="1164.1" y="368.4" width="2.6" height="13.6" fill="#6cbc6c" stroke="#d6d2da" stroke-width="0.9"/><rect x="1169.1" y="345.6" width="2.6" height="22.8" fill="#6cbc6c" stroke="#d6d2da" stroke-width="0.9"/><rect x="1174.1" y="345.1" width="2.6" height="1.2" fill="#5a606c" stroke="#d6d2da" stroke-width="0.9"/><rect x="1179.1" y="345.1" width="2.6" height="1.2" fill="#5a606c" stroke="#d6d2da" stroke-width="0.9"/><rect x="1184.1" y="345.1" width="2.6" height="1.2" fill="#5a606c" stroke="#d6d2da" stroke-width="0.9"/><rect x="1189.1" y="337.8" width="2.6" height="8.5" fill="#6cbc6c" stroke="#d6d2da" stroke-width="0.9"/><rect x="1194.1" y="336.5" width="2.6" height="1.2" fill="#c44c62" stroke="#d6d2da" stroke-width="0.9"/><rect x="1199.1" y="335.0" width="2.6" height="1.2" fill="#5a606c" stroke="#d6d2da" stroke-width="0.9"/><rect x="1204.1" y="335.6" width="2.6" height="2.2" fill="#5a606c" stroke="#d6d2da" stroke-width="0.9"/><rect x="1209.1" y="335.9" width="2.6" height="1.2" fill="#5a606c" stroke="#d6d2da" stroke-width="0.9"/><rect x="1214.1" y="336.4" width="2.6" height="8.6" fill="#c44c62" stroke="#d6d2da" stroke-width="0.9"/><rect x="1219.1" y="344.0" width="2.6" height="3.0" fill="#5a606c" stroke="#d6d2da" stroke-width="0.9"/><rect x="1224.1" y="347.8" width="2.6" height="14.9" fill="#c44c62" stroke="#d6d2da" stroke-width="0.9"/><rect x="1229.1" y="362.7" width="2.6" height="14.3" fill="#5a606c" stroke="#d6d2da" stroke-width="0.9"/><rect x="1234.1" y="377.0" width="2.6" height="13.5" fill="#c44c62" stroke="#d6d2da" stroke-width="0.9"/><rect x="1239.1" y="385.5" width="2.6" height="5.0" fill="#6cbc6c" stroke="#d6d2da" stroke-width="0.9"/><rect x="1244.1" y="374.9" width="2.6" height="11.4" fill="#6cbc6c" stroke="#d6d2da" stroke-width="0.9"/><rect x="1249.1" y="352.7" width="2.6" height="23.6" fill="#6cbc6c" stroke="#d6d2da" stroke-width="0.9"/><rect x="1254.1" y="328.5" width="2.6" height="25.0" fill="#6cbc6c" stroke="#d6d2da" stroke-width="0.9"/><rect x="1259.1" y="328.5" width="2.6" height="9.3" fill="#5a606c" stroke="#d6d2da" stroke-width="0.9"/><rect x="1264.1" y="337.3" width="2.6" height="1.2" fill="#5a606c" stroke="#d6d2da" stroke-width="0.9"/><rect x="1269.1" y="343.5" width="2.6" height="27.1" fill="#c44c62" stroke="#d6d2da" stroke-width="0.9"/><rect x="1274.1" y="370.6" width="2.6" height="30.6" fill="#c44c62" stroke="#d6d2da" stroke-width="0.9"/><rect x="1279.1" y="379.0" width="2.6" height="22.2" fill="#6cbc6c" stroke="#d6d2da" stroke-width="0.9"/><rect x="1284.1" y="367.7" width="2.6" height="7.2" fill="#6cbc6c" stroke="#d6d2da" stroke-width="0.9"/><rect x="1289.1" y="361.5" width="2.6" height="7.9" fill="#6cbc6c" stroke="#d6d2da" stroke-width="0.9"/><rect x="1294.1" y="355.9" width="2.6" height="5.6" fill="#6cbc6c" stroke="#d6d2da" stroke-width="0.9"/><rect x="1299.1" y="355.9" width="2.6" height="4.5" fill="#5a606c" stroke="#d6d2da" stroke-width="0.9"/><rect x="1304.1" y="350.2" width="2.6" height="10.2" fill="#6cbc6c" stroke="#d6d2da" stroke-width="0.9"/><rect x="1309.1" y="346.4" width="2.6" height="1.2" fill="#5a606c" stroke="#d6d2da" stroke-width="0.9"/><rect x="1314.1" y="345.2" width="2.6" height="1.2" fill="#5a606c" stroke="#d6d2da" stroke-width="0.9"/><rect x="1319.1" y="345.2" width="2.6" height="1.2" fill="#5a606c" stroke="#d6d2da" stroke-width="0.9"/><rect x="1324.1" y="344.6" width="2.6" height="2.3" fill="#5a606c" stroke="#d6d2da" stroke-width="0.9"/><rect x="1329.1" y="345.2" width="2.6" height="1.2" fill="#5a606c" stroke="#d6d2da" stroke-width="0.9"/><rect x="1334.1" y="342.4" width="2.6" height="2.2" fill="#5a606c" stroke="#d6d2da" stroke-width="0.9"/><rect x="1339.1" y="342.4" width="2.6" height="4.5" fill="#c44c62" stroke="#d6d2da" stroke-width="0.9"/><rect x="1344.1" y="349.0" width="2.6" height="18.0" fill="#c44c62" stroke="#d6d2da" stroke-width="0.9"/><rect x="1349.1" y="366.0" width="2.6" height="13.5" fill="#c44c62" stroke="#d6d2da" stroke-width="0.9"/><rect x="1354.1" y="373.8" width="2.6" height="6.8" fill="#6cbc6c" stroke="#d6d2da" stroke-width="0.9"/><rect x="1359.1" y="372.7" width="2.6" height="12.3" fill="#c44c62" stroke="#d6d2da" stroke-width="0.9"/><rect x="1364.1" y="385.0" width="2.6" height="2.3" fill="#5a606c" stroke="#d6d2da" stroke-width="0.9"/><rect x="1369.1" y="387.3" width="2.6" height="23.7" fill="#c44c62" stroke="#d6d2da" stroke-width="0.9"/><rect x="1374.1" y="411.0" width="2.6" height="18.0" fill="#c44c62" stroke="#d6d2da" stroke-width="0.9"/><rect x="1379.1" y="430.0" width="2.6" height="33.8" fill="#c44c62" stroke="#d6d2da" stroke-width="0.9"/><rect x="1384.1" y="449.0" width="2.6" height="14.8" fill="#6cbc6c" stroke="#d6d2da" stroke-width="0.9"/><rect x="1389.1" y="449.0" width="2.6" height="2.4" fill="#5a606c" stroke="#d6d2da" stroke-width="0.9"/><rect x="1394.1" y="451.4" width="2.6" height="11.3" fill="#c44c62" stroke="#d6d2da" stroke-width="0.9"/><rect x="1399.1" y="457.0" width="2.6" height="5.7" fill="#6cbc6c" stroke="#d6d2da" stroke-width="0.9"/><rect x="1404.1" y="457.0" width="2.6" height="12.4" fill="#c44c62" stroke="#d6d2da" stroke-width="0.9"/><rect x="1409.1" y="469.4" width="2.6" height="50.6" fill="#c44c62" stroke="#d6d2da" stroke-width="0.9"/><rect x="1414.1" y="521.8" width="2.6" height="1.2" fill="#5a606c" stroke="#d6d2da" stroke-width="0.9"/><polygon points="968.5,217 979.5,217 974,225.7" fill="#f2c77a" opacity="0.92"/><polygon points="1129.3,300 1140.3,300 1134.8,308.7" fill="#f2c77a" opacity="0.92"/><polygon points="1197.2,329.2 1208.2,329.2 1202.7,337.9" fill="#f2c77a" opacity="0.92"/><polygon points="1260.3,340 1271.3,340 1265.8,348.7" fill="#f2c77a" opacity="0.92"/><polygon points="1300.9,343.5 1311.9,343.5 1306.4,352.2" fill="#f2c77a" opacity="0.92"/><circle cx="1018.4" cy="302.8" r="5.6" fill="#80c488" opacity="0.9"/><circle cx="1138.6" cy="331.6" r="5.6" fill="#80c488" opacity="0.9"/><circle cx="1229.6" cy="371.3" r="5.6" fill="#80c488" opacity="0.9"/><circle cx="1355.4" cy="380.7" r="5.6" fill="#80c488" opacity="0.9"/><circle cx="1278.1" cy="378.4" r="5.6" fill="#c48c8c" opacity="0.95"/><text transform="translate(3.50 619.80) scale(1 0.92)" x="0" y="0" font-family="Liberation Sans, sans-serif" font-size="10" fill="#bc2430">CCI (14)</text><defs><clipPath id="cup"><rect x="0" y="600" width="1450" height="85"/></clipPath><clipPath id="cdn"><rect x="0" y="719" width="1450" height="44"/></clipPath></defs><polygon points="1.8,685.5 1.8,685.7 7.0,684.3 11.4,686.0 16.7,691.0 23.7,695.4 28.0,686.6 35.0,676.0 41.0,685.7 44.7,697.0 50.0,694.5 53.5,699.7 59.6,716.4 64.0,685.7 69.8,650.6 79.8,685.7 84.2,689.2 87.7,685.7 94.7,675.2 111.4,685.7 122.8,690.0 133.3,694.5 143.9,696.2 149.0,701.5 154.4,715.5 164.0,684.8 170.2,715.5 177.2,717.3 193.0,711.0 201.8,709.4 219.3,706.4 224.6,708.9 236.8,708.5 243.9,702.4 250.0,701.3 399.3,701.3 404.5,624.0 414.0,690.0 419.8,685.5 424.3,662.7 441.4,675.2 448.2,678.6 455.0,685.5 461.8,691.0 473.2,693.4 480.0,698.0 489.0,703.6 496.0,705.5 502.7,702.5 509.5,693.4 515.2,696.8 519.8,702.5 525.5,685.5 530.0,692.3 534.5,711.6 541.4,701.4 544.8,669.5 552.7,670.0 559.5,667.3 565.2,685.5 568.6,693.4 574.3,688.2 578.9,692.3 584.5,690.0 589.0,695.7 600.5,686.0 614.0,683.2 623.2,685.5 630.0,702.5 639.0,663.9 650.5,676.4 658.4,681.0 668.6,702.5 674.3,684.3 680.0,692.3 684.5,682.7 691.4,701.4 696.0,716.1 701.6,723.0 708.4,713.9 715.2,711.6 722.4,714.2 733.5,714.7 742.2,718.7 752.1,724.1 764.5,705.5 768.2,718.7 774.4,739.0 780.5,741.4 788.0,734.0 791.7,718.7 796.6,724.1 804.0,727.8 814.0,718.7 821.4,713.0 828.8,711.7 841.1,706.8 851.0,710.5 861.0,721.6 874.5,683.3 879.5,704.3 884.4,692.0 890.6,718.7 898.0,732.8 904.2,718.7 910.4,713.0 919.0,713.0 924.0,673.4 930.2,672.2 938.8,679.6 950.0,685.3 957.4,689.5 972.2,690.7 982.0,699.4 987.0,718.7 993.3,740.2 1001.9,718.7 1014.3,694.4 1018.0,718.7 1022.9,741.4 1030.4,731.5 1036.6,718.7 1045.2,706.8 1053.9,718.7 1066.2,716.7 1078.6,714.2 1088.8,719.0 1095.0,712.7 1100.0,712.2 1110.0,700.2 1120.1,667.6 1130.1,686.4 1135.2,693.9 1142.7,718.5 1148.9,746.5 1157.7,724.0 1165.2,726.5 1176.5,707.7 1185.3,702.7 1190.3,701.4 1200.3,692.6 1214.1,687.1 1222.9,698.9 1230.4,712.7 1239.2,740.3 1249.2,718.5 1259.2,692.6 1268.0,695.2 1279.3,721.5 1294.3,697.7 1300.6,694.7 1305.6,697.7 1313.1,687.6 1320.7,690.1 1330.7,690.1 1335.7,688.4 1343.2,692.6 1353.2,718.5 1360.8,729.0 1368.3,725.2 1383.3,735.3 1393.4,726.5 1404.6,715.2 1418.4,722.7 1419.7,721.5 1419.7,685.5" fill="#d01010" clip-path="url(#cup)"/><polygon points="1.8,718.5 1.8,685.7 7.0,684.3 11.4,686.0 16.7,691.0 23.7,695.4 28.0,686.6 35.0,676.0 41.0,685.7 44.7,697.0 50.0,694.5 53.5,699.7 59.6,716.4 64.0,685.7 69.8,650.6 79.8,685.7 84.2,689.2 87.7,685.7 94.7,675.2 111.4,685.7 122.8,690.0 133.3,694.5 143.9,696.2 149.0,701.5 154.4,715.5 164.0,684.8 170.2,715.5 177.2,717.3 193.0,711.0 201.8,709.4 219.3,706.4 224.6,708.9 236.8,708.5 243.9,702.4 250.0,701.3 399.3,701.3 404.5,624.0 414.0,690.0 419.8,685.5 424.3,662.7 441.4,675.2 448.2,678.6 455.0,685.5 461.8,691.0 473.2,693.4 480.0,698.0 489.0,703.6 496.0,705.5 502.7,702.5 509.5,693.4 515.2,696.8 519.8,702.5 525.5,685.5 530.0,692.3 534.5,711.6 541.4,701.4 544.8,669.5 552.7,670.0 559.5,667.3 565.2,685.5 568.6,693.4 574.3,688.2 578.9,692.3 584.5,690.0 589.0,695.7 600.5,686.0 614.0,683.2 623.2,685.5 630.0,702.5 639.0,663.9 650.5,676.4 658.4,681.0 668.6,702.5 674.3,684.3 680.0,692.3 684.5,682.7 691.4,701.4 696.0,716.1 701.6,723.0 708.4,713.9 715.2,711.6 722.4,714.2 733.5,714.7 742.2,718.7 752.1,724.1 764.5,705.5 768.2,718.7 774.4,739.0 780.5,741.4 788.0,734.0 791.7,718.7 796.6,724.1 804.0,727.8 814.0,718.7 821.4,713.0 828.8,711.7 841.1,706.8 851.0,710.5 861.0,721.6 874.5,683.3 879.5,704.3 884.4,692.0 890.6,718.7 898.0,732.8 904.2,718.7 910.4,713.0 919.0,713.0 924.0,673.4 930.2,672.2 938.8,679.6 950.0,685.3 957.4,689.5 972.2,690.7 982.0,699.4 987.0,718.7 993.3,740.2 1001.9,718.7 1014.3,694.4 1018.0,718.7 1022.9,741.4 1030.4,731.5 1036.6,718.7 1045.2,706.8 1053.9,718.7 1066.2,716.7 1078.6,714.2 1088.8,719.0 1095.0,712.7 1100.0,712.2 1110.0,700.2 1120.1,667.6 1130.1,686.4 1135.2,693.9 1142.7,718.5 1148.9,746.5 1157.7,724.0 1165.2,726.5 1176.5,707.7 1185.3,702.7 1190.3,701.4 1200.3,692.6 1214.1,687.1 1222.9,698.9 1230.4,712.7 1239.2,740.3 1249.2,718.5 1259.2,692.6 1268.0,695.2 1279.3,721.5 1294.3,697.7 1300.6,694.7 1305.6,697.7 1313.1,687.6 1320.7,690.1 1330.7,690.1 1335.7,688.4 1343.2,692.6 1353.2,718.5 1360.8,729.0 1368.3,725.2 1383.3,735.3 1393.4,726.5 1404.6,715.2 1418.4,722.7 1419.7,721.5 1419.7,718.5" fill="#d01010" clip-path="url(#cdn)"/><path d="M2 685.5H1450M2 701.5H1450M2 718.5H1450" stroke="#a4acbc" stroke-width="1"/><path d="M2 724.5H1450" stroke="#e8ecf4" stroke-width="1.2" stroke-dasharray="5,3"/><polyline points="1.8,685.7 7.0,684.3 11.4,686.0 16.7,691.0 23.7,695.4 28.0,686.6 35.0,676.0 41.0,685.7 44.7,697.0 50.0,694.5 53.5,699.7 59.6,716.4 64.0,685.7 69.8,650.6 79.8,685.7 84.2,689.2 87.7,685.7 94.7,675.2 111.4,685.7 122.8,690.0 133.3,694.5 143.9,696.2 149.0,701.5 154.4,715.5 164.0,684.8 170.2,715.5 177.2,717.3 193.0,711.0 201.8,709.4 219.3,706.4 224.6,708.9 236.8,708.5 243.9,702.4 250.0,701.3 399.3,701.3 404.5,624.0 414.0,690.0 419.8,685.5 424.3,662.7 441.4,675.2 448.2,678.6 455.0,685.5 461.8,691.0 473.2,693.4 480.0,698.0 489.0,703.6 496.0,705.5 502.7,702.5 509.5,693.4 515.2,696.8 519.8,702.5 525.5,685.5 530.0,692.3 534.5,711.6 541.4,701.4 544.8,669.5 552.7,670.0 559.5,667.3 565.2,685.5 568.6,693.4 574.3,688.2 578.9,692.3 584.5,690.0 589.0,695.7 600.5,686.0 614.0,683.2 623.2,685.5 630.0,702.5 639.0,663.9 650.5,676.4 658.4,681.0 668.6,702.5 674.3,684.3 680.0,692.3 684.5,682.7 691.4,701.4 696.0,716.1 701.6,723.0 708.4,713.9 715.2,711.6 722.4,714.2 733.5,714.7 742.2,718.7 752.1,724.1 764.5,705.5 768.2,718.7 774.4,739.0 780.5,741.4 788.0,734.0 791.7,718.7 796.6,724.1 804.0,727.8 814.0,718.7 821.4,713.0 828.8,711.7 841.1,706.8 851.0,710.5 861.0,721.6 874.5,683.3 879.5,704.3 884.4,692.0 890.6,718.7 898.0,732.8 904.2,718.7 910.4,713.0 919.0,713.0 924.0,673.4 930.2,672.2 938.8,679.6 950.0,685.3 957.4,689.5 972.2,690.7 982.0,699.4 987.0,718.7 993.3,740.2 1001.9,718.7 1014.3,694.4 1018.0,718.7 1022.9,741.4 1030.4,731.5 1036.6,718.7 1045.2,706.8 1053.9,718.7 1066.2,716.7 1078.6,714.2 1088.8,719.0 1095.0,712.7 1100.0,712.2 1110.0,700.2 1120.1,667.6 1130.1,686.4 1135.2,693.9 1142.7,718.5 1148.9,746.5 1157.7,724.0 1165.2,726.5 1176.5,707.7 1185.3,702.7 1190.3,701.4 1200.3,692.6 1214.1,687.1 1222.9,698.9 1230.4,712.7 1239.2,740.3 1249.2,718.5 1259.2,692.6 1268.0,695.2 1279.3,721.5 1294.3,697.7 1300.6,694.7 1305.6,697.7 1313.1,687.6 1320.7,690.1 1330.7,690.1 1335.7,688.4 1343.2,692.6 1353.2,718.5 1360.8,729.0 1368.3,725.2 1383.3,735.3 1393.4,726.5 1404.6,715.2 1418.4,722.7 1419.7,721.5" fill="none" stroke="#d42020" stroke-width="1.1"/><text transform="translate(3.50 773.40) scale(1 0.92)" x="0" y="0" font-family="Liberation Sans, sans-serif" font-size="10.5" fill="#aab4d0">SLOW (14, 3)</text><path d="M2 802.5H1450M2 875.5H1450" stroke="#e8b46c" stroke-width="1.2"/><path d="M2 889.5H1450" stroke="#e8ecf4" stroke-width="1.2" stroke-dasharray="5,3"/><polyline points="1.7,831.0 14.2,801.0 21.7,803.4 25.0,805.0 29.2,801.8 35.0,797.6 41.0,801.0 46.0,815.0 59.3,849.4 74.4,805.0 84.4,826.8 97.0,800.0 104.4,786.0 117.0,786.7 130.3,790.0 147.0,800.0 165.4,810.0 179.6,851.0 220.6,851.0 234.8,862.0 240.0,857.0 252.8,840.0 398.8,839.0 410.0,818.0 419.7,840.6 429.3,824.5 434.0,786.0 442.0,786.0 453.3,790.9 464.6,808.5 477.4,811.7 490.0,818.0 506.3,847.0 519.0,851.8 528.7,843.8 540.0,861.4 557.6,808.5 573.7,834.2 586.5,827.7 609.0,813.3 629.8,829.4 644.2,792.5 657.0,795.7 670.0,827.7 684.3,802.0 692.4,815.0 705.2,866.2 715.0,869.0 729.8,878.8 747.2,890.0 764.5,859.0 770.7,861.5 779.3,873.9 789.2,860.3 797.9,864.0 804.0,885.0 809.0,885.0 818.9,864.0 831.2,862.8 843.6,852.9 853.5,854.0 863.4,862.8 875.8,825.7 880.7,825.7 889.4,856.6 893.0,857.8 899.3,875.1 904.2,856.6 912.9,850.4 920.3,852.9 933.9,791.0 940.0,791.0 950.0,788.6 962.3,789.8 972.2,787.3 979.6,789.8 999.4,856.6 1004.4,860.3 1014.3,828.1 1021.7,840.5 1029.1,878.8 1044.0,859.0 1052.6,864.0 1060.0,885.0 1073.6,883.8 1080.0,884.0 1090.0,886.6 1100.0,882.8 1112.6,865.3 1128.9,811.4 1133.9,816.4 1156.5,882.8 1160.2,886.6 1170.2,872.8 1184.0,833.9 1190.3,835.2 1205.3,823.9 1219.1,801.3 1224.1,803.8 1244.2,879.0 1248.0,877.8 1264.3,811.4 1269.3,810.1 1284.3,867.8 1300.6,836.4 1320.7,818.9 1333.2,813.9 1344.5,793.8 1349.5,798.8 1363.3,864.0 1373.3,876.5 1384.6,886.6 1399.6,876.5 1408.4,879.0 1419.7,887.8" fill="none" stroke="#d4dcf2" stroke-width="1"/><polyline points="1.7,824.3 15.0,803.4 30.0,803.4 36.8,799.3 44.3,804.3 63.5,845.2 80.2,814.3 90.2,820.2 95.3,816.8 108.6,788.4 117.0,786.7 132.0,791.0 150.4,801.8 163.8,809.3 188.8,850.2 220.6,850.2 235.6,859.4 250.0,850.2 258.0,840.0 398.8,839.0 419.7,832.6 426.0,829.4 439.0,789.2 447.0,786.0 461.4,798.9 471.0,810.0 487.0,816.5 499.9,834.2 516.0,850.2 532.0,842.2 544.8,848.6 564.0,811.7 583.3,829.4 609.0,816.5 634.6,821.3 650.6,794.0 660.3,798.9 676.3,824.5 690.8,815.0 695.6,818.0 711.6,866.2 720.0,870.0 724.9,873.9 749.6,890.0 769.4,862.8 781.8,869.0 799.0,864.0 811.5,881.3 821.4,862.8 838.7,861.5 853.5,855.3 865.9,859.0 883.2,828.1 900.5,864.0 917.8,854.1 925.2,836.8 940.0,794.7 952.4,788.6 977.2,788.6 987.0,802.2 1004.4,855.3 1019.2,836.8 1026.6,844.2 1036.5,872.6 1048.9,862.8 1056.3,865.2 1066.2,883.8 1080.0,885.3 1095.0,885.3 1108.8,874.0 1132.6,818.9 1140.2,820.1 1160.2,885.3 1167.7,880.3 1185.3,836.4 1195.3,831.4 1210.4,820.1 1222.9,802.6 1230.4,806.4 1250.5,872.8 1255.5,869.0 1270.5,816.4 1275.5,817.6 1289.3,860.3 1303.1,841.4 1325.7,817.6 1333.2,815.1 1347.0,800.1 1368.3,866.5 1378.3,877.8 1385.8,884.0 1403.4,877.8 1410.9,880.3 1419.7,887.8" fill="none" stroke="#94a4e0" stroke-width="1.1"/><text transform="translate(1475.00 84.20) scale(1 0.92)" x="0" y="0" text-anchor="middle" font-family="Liberation Sans, sans-serif" font-size="10.5" fill="#ffffff">1303.</text><text transform="translate(1475.00 139.33) scale(1 0.92)" x="0" y="0" text-anchor="middle" font-family="Liberation Sans, sans-serif" font-size="10.5" fill="#ffffff">1283.</text><text transform="translate(1475.00 194.46) scale(1 0.92)" x="0" y="0" text-anchor="middle" font-family="Liberation Sans, sans-serif" font-size="10.5" fill="#ffffff">1263.</text><text transform="translate(1475.00 249.59) scale(1 0.92)" x="0" y="0" text-anchor="middle" font-family="Liberation Sans, sans-serif" font-size="10.5" fill="#ffffff">1243.</text><text transform="translate(1475.00 304.72) scale(1 0.92)" x="0" y="0" text-anchor="middle" font-family="Liberation Sans, sans-serif" font-size="10.5" fill="#ffffff">1223.</text><text transform="translate(1475.00 359.85) scale(1 0.92)" x="0" y="0" text-anchor="middle" font-family="Liberation Sans, sans-serif" font-size="10.5" fill="#ffffff">1203.</text><text transform="translate(1475.00 414.98) scale(1 0.92)" x="0" y="0" text-anchor="middle" font-family="Liberation Sans, sans-serif" font-size="10.5" fill="#ffffff">1183.</text><text transform="translate(1475.00 470.11) scale(1 0.92)" x="0" y="0" text-anchor="middle" font-family="Liberation Sans, sans-serif" font-size="10.5" fill="#ffffff">1163.</text><text transform="translate(1475.00 580.37) scale(1 0.92)" x="0" y="0" text-anchor="middle" font-family="Liberation Sans, sans-serif" font-size="10.5" fill="#ffffff">1123.</text><text transform="translate(1475.00 628.60) scale(1 0.92)" x="0" y="0" text-anchor="middle" font-family="Liberation Sans, sans-serif" font-size="10.5" fill="#ffffff">467.00</text><text transform="translate(1475.00 661.20) scale(1 0.92)" x="0" y="0" text-anchor="middle" font-family="Liberation Sans, sans-serif" font-size="10.5" fill="#ffffff">267.00</text><text transform="translate(1475.00 694.60) scale(1 0.92)" x="0" y="0" text-anchor="middle" font-family="Liberation Sans, sans-serif" font-size="10.5" fill="#ffffff">67.00</text><text transform="translate(1475.00 761.60) scale(1 0.92)" x="0" y="0" text-anchor="middle" font-family="Liberation Sans, sans-serif" font-size="10.5" fill="#ffffff">-333.00</text><text transform="translate(1475.00 782.50) scale(1 0.92)" x="0" y="0" text-anchor="middle" font-family="Liberation Sans, sans-serif" font-size="10.5" fill="#ffffff">100.00</text><text transform="translate(1475.00 843.80) scale(1 0.92)" x="0" y="0" text-anchor="middle" font-family="Liberation Sans, sans-serif" font-size="10.5" fill="#ffffff">50.00</text><text transform="translate(1475.00 905.50) scale(1 0.92)" x="0" y="0" text-anchor="middle" font-family="Liberation Sans, sans-serif" font-size="10.5" fill="#ffffff">0.00</text><rect x="1451" y="374" width="45" height="15" fill="#b2bacb"/><text transform="translate(1475.00 385.20) scale(1 0.92)" x="0" y="0" text-anchor="middle" font-family="Liberation Sans, sans-serif" font-size="10.5" fill="#000000">1193.5</text><rect x="1451" y="512" width="45" height="21" fill="#b2bacb"/><svg x="1451" y="512" width="45" height="21"><svg x="0" y="14.5" width="45" height="7"><text transform="translate(24.00 1.60) scale(1 0.92)" x="0" y="0" text-anchor="middle" font-family="Liberation Sans, sans-serif" font-size="10.5" fill="#000">1143.7</text></svg><rect x="0" y="14" width="45" height="0.8" fill="#6a7080"/><text transform="translate(24.00 10.70) scale(1 0.92)" x="0" y="0" text-anchor="middle" font-family="Liberation Sans, sans-serif" font-size="10.5" fill="#000">1143.7</text></svg><rect x="1451" y="718" width="45" height="12" fill="#b2bacb"/><text transform="translate(1475.00 728.00) scale(1 0.92)" x="0" y="0" text-anchor="middle" font-family="Liberation Sans, sans-serif" font-size="10.5" fill="#000000">-136.64</text><rect x="1451" y="883" width="45" height="12" fill="#b2bacb"/><text transform="translate(1475.00 893.00) scale(1 0.92)" x="0" y="0" text-anchor="middle" font-family="Liberation Sans, sans-serif" font-size="10.5" fill="#000000">9.15</text></svg>
</body></html>
